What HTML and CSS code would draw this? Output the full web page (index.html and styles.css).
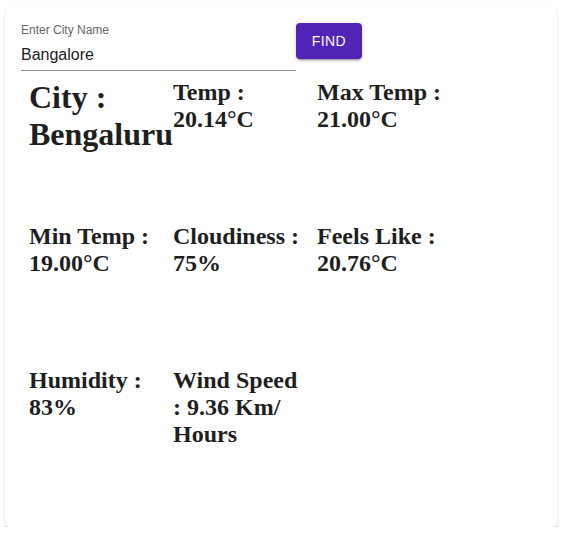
FILE: index.html
```html
<!DOCTYPE html>
<html>
<head>
<meta charset="utf-8">
<link rel="stylesheet" href="styles.css">
</head>
<body>
<div class="card">
  <div class="search">
    <div class="field">
      <label class="field-label">Enter City Name</label>
      <div class="field-input">Bangalore</div>
    </div>
    <button class="find-btn">FIND</button>
  </div>
  <div class="grid">
    <div class="cell"><h1>City : Bengaluru</h1></div>
    <div class="cell"><h2>Temp : 20.14°C</h2></div>
    <div class="cell"><h2>Max Temp : 21.00°C</h2></div>
    <div class="cell"><h2>Min Temp : 19.00°C</h2></div>
    <div class="cell"><h2>Cloudiness : 75%</h2></div>
    <div class="cell"><h2>Feels Like : 20.76°C</h2></div>
    <div class="cell"><h2>Humidity : 83%</h2></div>
    <div class="cell"><h2>Wind Speed : 9.36 Km/ Hours</h2></div>
  </div>
</div>
</body>
</html>
```
FILE: styles.css
```css
html, body {
  margin: 0;
  padding: 0;
  background: #fff;
}
.card {
  box-sizing: border-box;
  margin: 7px 0 0 5px;
  width: 552px;
  height: 520px;
  padding: 16px;
  background: #fff;
  border-radius: 4px;
  box-shadow: 0 2px 1px -1px rgba(0,0,0,0.2), 0 1px 1px 0 rgba(0,0,0,0.14), 0 1px 3px 0 rgba(0,0,0,0.12);
}
.search {
  display: flex;
  align-items: flex-start;
}
.field {
  width: 275px;
  height: 47px;
  display: flex;
  flex-direction: column;
  border-bottom: 1px solid #8a8a8a;
  font-family: "Liberation Sans", Arial, sans-serif;
}
.field-label {
  font-size: 12px;
  line-height: 15px;
  color: #666;
}
.field-input {
  margin-top: 5px;
  font-size: 16px;
  line-height: 23px;
  color: #1c1c1c;
}
.find-btn {
  width: 66px;
  height: 36px;
  border: none;
  border-radius: 4px;
  background: #5024b7;
  color: #fff;
  font-family: "Liberation Sans", Arial, sans-serif;
  font-size: 14px;
  font-weight: normal;
  letter-spacing: 0.4px;
  box-shadow: 0 3px 1px -2px rgba(0,0,0,0.2), 0 2px 2px 0 rgba(0,0,0,0.14), 0 1px 5px 0 rgba(0,0,0,0.12);
  padding: 0;
}
.grid {
  display: grid;
  grid-template-columns: repeat(3, 144px);
  grid-auto-rows: 144px;
  margin: 8px 0 0 8px;
}
.cell {
  min-width: 0;
  padding-right: 12px;
}
.cell h1, .cell h2 {
  margin: 0;
  font-family: "Liberation Serif", "Times New Roman", serif;
  font-weight: bold;
  color: #1f1f1f;
}
.cell h1 {
  font-size: 32px;
  line-height: 37px;
}
.cell h2 {
  font-size: 24px;
  line-height: 27px;
}
```
